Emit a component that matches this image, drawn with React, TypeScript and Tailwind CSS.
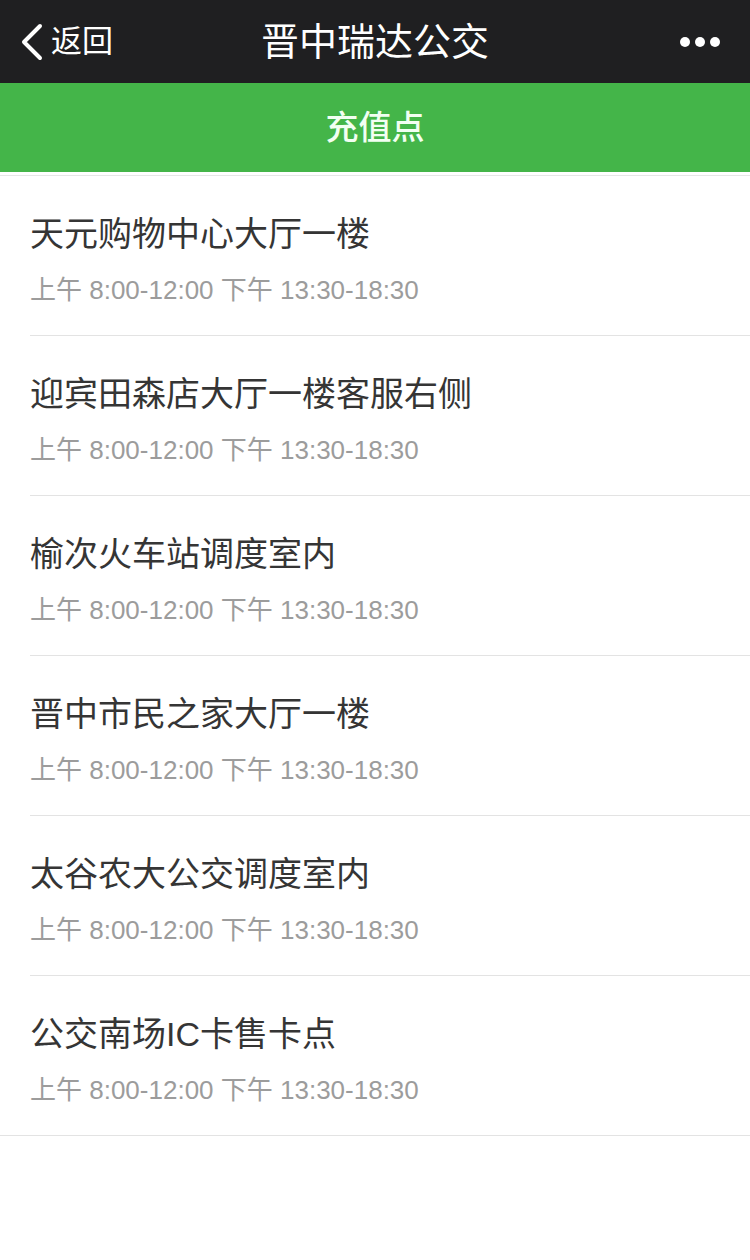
const POINTS = [
    '天元购物中心大厅一楼',
    '迎宾田森店大厅一楼客服右侧',
    '榆次火车站调度室内',
    '晋中市民之家大厅一楼',
    '太谷农大公交调度室内',
    '公交南场IC卡售卡点',
]

const HOURS = '上午 8:00-12:00 下午 13:30-18:30'

const App = () => {
    return (
        <div
            className="w-[750px] min-h-[1260px] bg-white"
            style={{ fontFamily: '"Liberation Sans", "Noto Sans CJK SC", sans-serif' }}
        >
            {/* Top nav */}
            <div className="relative flex items-center h-[83px] bg-[#1f1f21] text-white">
                <div className="flex items-center pl-[20px]">
                    <svg width="24" height="38" viewBox="0 0 24 38" fill="none">
                        <polyline
                            points="20,3 4,19 20,35"
                            stroke="white"
                            strokeWidth="4"
                            strokeLinecap="round"
                            strokeLinejoin="round"
                        />
                    </svg>
                    <span className="text-[31px] leading-none ml-[7px]">返回</span>
                </div>
                <div className="absolute left-0 right-0 text-center text-[38px] leading-none pointer-events-none">
                    晋中瑞达公交
                </div>
                <div className="ml-auto flex items-center gap-[5px] pr-[30px]">
                    <span className="w-[10px] h-[10px] rounded-full bg-white" />
                    <span className="w-[10px] h-[10px] rounded-full bg-white" />
                    <span className="w-[10px] h-[10px] rounded-full bg-white" />
                </div>
            </div>

            {/* Green header */}
            <div className="flex items-center justify-center h-[89px] bg-[#44b549] text-[#f2fff2] text-[33px] font-medium">
                充值点
            </div>

            {/* List */}
            <div className="mt-[3px] border-t border-[#e6e6e6]">
                {POINTS.map((name, i) => (
                    <div key={name} className={i === POINTS.length - 1 ? 'border-b border-[#e3e3e3]' : ''}>
                        <div
                            className={
                                'ml-[30px] pt-[38px] pb-[30px] ' +
                                (i === POINTS.length - 1 ? '' : 'border-b border-[#e3e3e3]')
                            }
                        >
                            <div className="text-[34px] leading-[40px] text-[#353535]">{name}</div>
                            <div className="mt-[21px] text-[26px] leading-[30px] text-[#9c9c9c]">{HOURS}</div>
                        </div>
                    </div>
                ))}
            </div>
        </div>
    )
}

export default App
